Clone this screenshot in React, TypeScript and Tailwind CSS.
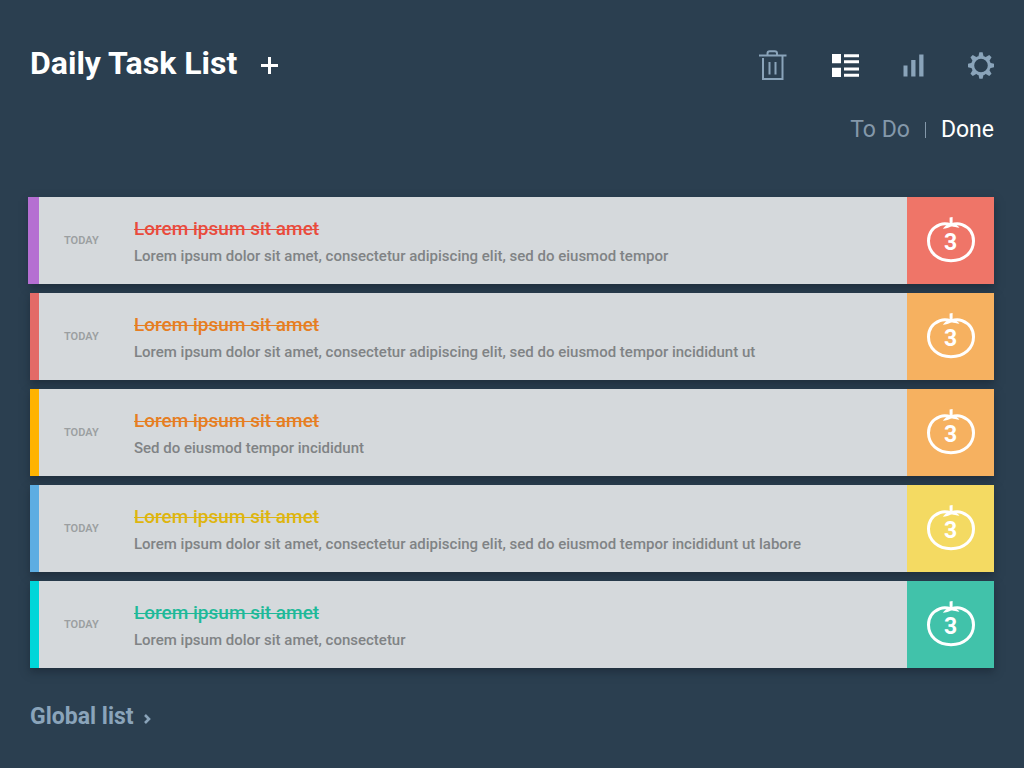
import React from "react";

type Task = {
  title: string;
  detail: string;
  stripe: string;
  text: string;
  tile: string;
  count: number;
};

const tasks: Task[] = [
  {
    title: "Lorem ipsum sit amet",
    detail: "Lorem ipsum dolor sit amet, consectetur adipiscing elit, sed do eiusmod tempor",
    stripe: "-ml-0.5 w-[11px] bg-[#b56fd2]",
    text: "text-[#e94b3c]",
    tile: "bg-[#ef7568]",
    count: 3,
  },
  {
    title: "Lorem ipsum sit amet",
    detail: "Lorem ipsum dolor sit amet, consectetur adipiscing elit, sed do eiusmod tempor incididunt ut",
    stripe: "w-[9px] bg-[#e36a67]",
    text: "text-[#e67e22]",
    tile: "bg-[#f6b160]",
    count: 3,
  },
  {
    title: "Lorem ipsum sit amet",
    detail: "Sed do eiusmod tempor incididunt",
    stripe: "w-[9px] bg-[#ffb300]",
    text: "text-[#e67e22]",
    tile: "bg-[#f6b160]",
    count: 3,
  },
  {
    title: "Lorem ipsum sit amet",
    detail: "Lorem ipsum dolor sit amet, consectetur adipiscing elit, sed do eiusmod tempor incididunt ut labore",
    stripe: "w-[9px] bg-[#5dade2]",
    text: "text-[#deb50f]",
    tile: "bg-[#f4da62]",
    count: 3,
  },
  {
    title: "Lorem ipsum sit amet",
    detail: "Lorem ipsum dolor sit amet, consectetur",
    stripe: "w-[9px] bg-[#00d6d9]",
    text: "text-[#1fb999]",
    tile: "bg-[#41c2aa]",
    count: 3,
  },
];

function TrashIcon() {
  return (
    <svg width="28" height="31" viewBox="0 0 28 31" fill="none" stroke="currentColor" strokeWidth="2" aria-hidden="true">
      <path d="M0 5.5H27.5" />
      <path d="M8.5 5V3.5Q8.5 1.200 10.800 1.200H15.700Q18 1.200 18 3.500V5" />
      <path d="M4 8V29H23.500V6" />
      <path d="M10.500 12V24.500M16.500 12V24.500" strokeWidth="2" />
    </svg>
  );
}

function ListIcon() {
  return (
    <svg width="28" height="23" viewBox="0 0 28 23" fill="currentColor" aria-hidden="true">
      <path d="M1 0H10V9.300H1ZM1 13.800H10V23H1ZM13 0.300H28V3.300H13ZM13 6.300H28V9.300H13ZM13 13.500H28V16.500H13ZM13 19.700H28V22.700H13Z" />
    </svg>
  );
}

function BarsIcon() {
  return (
    <svg width="21" height="23" viewBox="0 0 21 23" fill="currentColor" aria-hidden="true">
      <path d="M0.500 11.500H4.500V22.500H0.500ZM8.200 6H12.500V22.500H8.200ZM16.200 0.500H20.500V22.500H16.200Z" />
    </svg>
  );
}

function GearIcon() {
  return (
    <svg width="26" height="27" viewBox="-13 -13.5 26 27" stroke="currentColor" fill="none" aria-hidden="true">
      <circle r="8.300" strokeWidth="3" />
      {[0, 45, 90, 135, 180, 225, 270, 315].map((angle) => (
        <path key={angle} d="M-2.700 -8.800L-1.600 -13.300H1.600L2.700 -8.800Z" fill="currentColor" stroke="none" transform={`rotate(${angle})`} />
      ))}
    </svg>
  );
}

function TomatoIcon() {
  return (
    <svg className="col-start-1 row-start-1" width="48" height="48" viewBox="0 0 48 48" fill="none" aria-hidden="true">
      <path
        d="M24 8C20.500 6.700 16.500 6.300 13 7.700C6 10.500 1.500 16.500 1.500 24C1.500 35.500 11 43.700 24 43.700S46.500 35.500 46.500 24C46.500 16.500 42 10.500 35 7.700C31.500 6.300 27.500 6.700 24 8Z"
        stroke="currentColor"
        strokeWidth="3"
      />
      <path
        d="M22.600 0.500L25.600 0V6.400C28.500 6.800 31 8.500 32.500 10.800C29.500 10.200 26.800 9.900 24.300 8.900C22 10.600 19 11.600 15.800 11.800C17.800 9.300 20 7.200 22.600 6.400Z"
        fill="currentColor"
      />
    </svg>
  );
}

function TaskRow({ task }: { task: Task }) {
  return (
    <li className="flex h-[87px] bg-[#d5d9dc] shadow-[0_4px_8px_rgba(20,32,44,0.5)]">
      <span className={`shrink-0 ${task.stripe}`} />
      <span className="flex w-[95px] shrink-0 items-center pt-0.5 pl-[25px] text-[11px] font-semibold text-[#9b9fa1]">TODAY</span>
      <div className="min-w-0 flex-1 pt-5">
        <h2 className={`text-[19px] leading-6 font-medium line-through decoration-1 ${task.text}`}>{task.title}</h2>
        <p className="mt-1 text-[15px] leading-[22px] font-medium text-[#808385]">{task.detail}</p>
      </div>
      <div className={`grid w-[87px] shrink-0 place-items-center text-white ${task.tile}`}>
        <TomatoIcon />
        <span className="col-start-1 row-start-1 pt-1 text-[23px] leading-6 font-bold">{task.count}</span>
      </div>
    </li>
  );
}

export default function App() {
  return (
    <main className="min-h-screen bg-[#2b3f50] px-[30px] pt-11 pb-8 font-[Roboto,sans-serif]">
      <header>
        <div className="flex items-center justify-between">
          <div className="flex items-center gap-6">
            <h1 className="text-[32px] leading-[38px] font-bold text-white">Daily Task List</h1>
            <button type="button" aria-label="Add task" className="pt-1 text-white">
              <svg width="17" height="17" viewBox="0 0 17 17" stroke="currentColor" strokeWidth="3" aria-hidden="true">
                <path d="M0 8.500H17M8.500 0V17" />
              </svg>
            </button>
          </div>
          <nav aria-label="Tools" className="flex items-center gap-11 pt-1 text-[#8aa4ba]">
            <button type="button" aria-label="Delete"><TrashIcon /></button>
            <button type="button" aria-label="List view" className="text-white"><ListIcon /></button>
            <button type="button" aria-label="Statistics"><BarsIcon /></button>
            <button type="button" aria-label="Settings"><GearIcon /></button>
          </nav>
        </div>
        <nav aria-label="Filter" className="mt-8 flex items-center justify-end gap-[15px] text-[23px] leading-8">
          <button type="button" className="text-[#8498aa]">To Do</button>
          <span className="h-4 w-px bg-[#8498aa]" />
          <button type="button" className="text-white">Done</button>
        </nav>
      </header>
      <ul className="mt-[51px] flex flex-col gap-[9px]">
        {tasks.map((task, index) => (
          <TaskRow key={index} task={task} />
        ))}
      </ul>
      <a href="#global" className="mt-[33px] inline-flex items-center gap-2.5 text-[23px] leading-8 font-bold text-[#8aa4ba]">
        Global list
        <svg width="7" height="10" viewBox="0 0 7 10" fill="none" stroke="currentColor" strokeWidth="2.600" className="mt-1" aria-hidden="true">
          <path d="M1 1L5 5L1 9" />
        </svg>
      </a>
    </main>
  );
}
